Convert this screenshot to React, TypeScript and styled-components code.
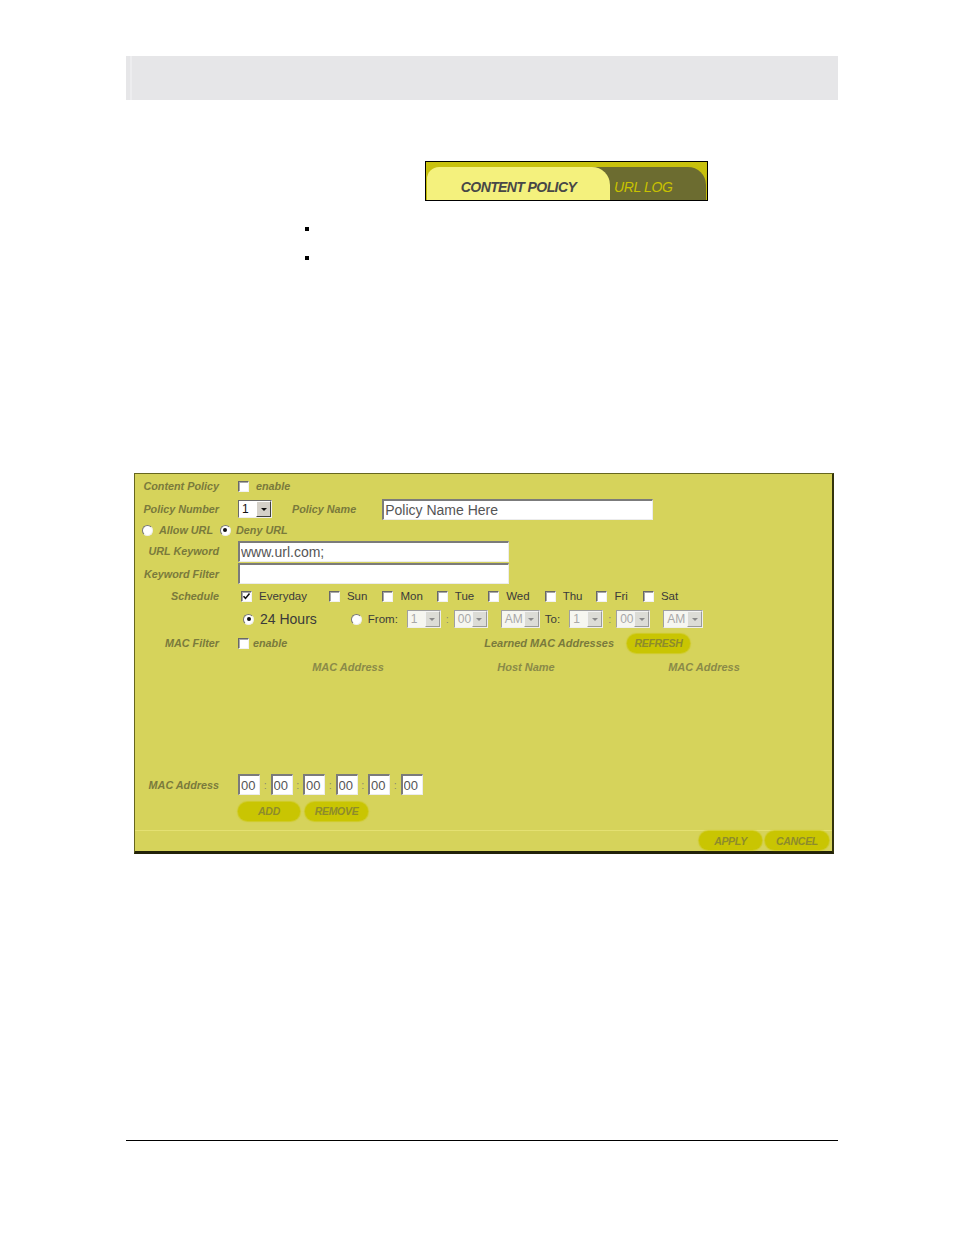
import React from 'react'
import styled, { createGlobalStyle } from 'styled-components'

const GlobalStyle = createGlobalStyle`
  html, body {
    margin: 0;
    padding: 0;
    background: #fff;
  }
  body {
    font-family: 'Liberation Sans', Arial, sans-serif;
  }
`

const Page = styled.div`
  width: 954px;
  min-height: 1235px;
  padding-left: 126px;
  box-sizing: border-box;
  display: flex;
  flex-direction: column;
  align-items: flex-start;
`

const HeaderBar = styled.div`
  margin-top: 56px;
  width: 712px;
  height: 44px;
  background: #e6e6e8;
  box-shadow: inset 4px 0 0 #e6e6e8, inset 6px 0 0 #ededef;
`

/* ---------- tab strip ---------- */

const TabStrip = styled.div`
  margin: 61px 0 0 299px;
  width: 283px;
  height: 40px;
  box-sizing: border-box;
  border: 1px solid #000;
  background: linear-gradient(180deg, #c9c20e 0%, #c2ba0a 100%);
  display: flex;
  align-items: flex-end;
  padding: 0 1px;
`

const Tab = styled.div<{ $active?: boolean }>`
  height: 33px;
  box-sizing: border-box;
  padding-top: 7px;
  display: flex;
  align-items: center;
  font-style: italic;
  font-size: 14px;
  white-space: nowrap;
  ${({ $active }) =>
    $active
      ? `
    position: relative;
    z-index: 1;
    width: 183px;
    justify-content: center;
    background: #f4f17d;
    border-radius: 12px 18px 0 0;
    color: #474747;
    font-weight: bold;
    letter-spacing: -0.6px;
  `
      : `
    flex: 1;
    margin-left: -20px;
    padding-left: 24px;
    background: #6c6c30;
    border-radius: 0 18px 0 0;
    color: #c9c200;
    letter-spacing: -0.4px;
  `}
`

/* ---------- bullets ---------- */

const BulletList = styled.ul`
  list-style: none;
  margin: 26px 0 0 179px;
  padding: 0;
  display: flex;
  flex-direction: column;
  gap: 25px;
`

const Bullet = styled.li`
  width: 4px;
  height: 4px;
  background: #000;
`

/* ---------- form panel ---------- */

const Panel = styled.div`
  margin: 213px 0 0 8px;
  width: 700px;
  box-sizing: border-box;
  background: #d6d35b;
  border-style: solid;
  border-width: 1px 2px 3px 1px;
  border-color: #66661f #33330c #222208 #66661f;
  display: flex;
  flex-direction: column;
  font-family: 'Liberation Sans', Arial, sans-serif;
`

const Row = styled.div<{ $h: number; $pl?: number }>`
  height: ${({ $h }) => $h}px;
  padding-left: ${({ $pl = 0 }) => $pl}px;
  display: flex;
  align-items: center;
  flex-shrink: 0;
`

const FieldLabel = styled.span`
  width: 84px;
  margin-right: 19px;
  flex-shrink: 0;
  text-align: right;
  font-style: italic;
  font-weight: bold;
  font-size: 10.8px;
  color: #7a7a3c;
  white-space: nowrap;
`

const Note = styled.span<{ $ml?: number; $size?: number }>`
  margin-left: ${({ $ml = 0 }) => $ml}px;
  font-style: italic;
  font-weight: bold;
  font-size: ${({ $size = 10.8 }) => $size}px;
  color: #7a7a3c;
  white-space: nowrap;
`

const Plain = styled.span<{ $ml?: number; $size?: number }>`
  margin-left: ${({ $ml = 0 }) => $ml}px;
  font-size: ${({ $size = 11.5 }) => $size}px;
  color: #3a3a3a;
  white-space: nowrap;
`

const Colon = styled.span<{ $w: number }>`
  width: ${({ $w }) => $w}px;
  text-align: center;
  font-size: 11px;
  color: #8a8a70;
  flex-shrink: 0;
`

const CheckBox = styled.span<{ $ml?: number }>`
  margin-left: ${({ $ml = 0 }) => $ml}px;
  width: 11px;
  height: 11px;
  box-sizing: border-box;
  flex-shrink: 0;
  background: #fff;
  border: 1px solid;
  border-color: #686868 #f2f2f2 #f2f2f2 #686868;
  box-shadow: inset 1px 1px 0 #a8a8a8;
  display: inline-flex;
  align-items: center;
  justify-content: center;
`

const RadioDot = styled.span<{ $on?: boolean; $ml?: number }>`
  margin-left: ${({ $ml = 0 }) => $ml}px;
  width: 11px;
  height: 11px;
  box-sizing: border-box;
  flex-shrink: 0;
  border-radius: 50%;
  background: #fff;
  border: 1px solid;
  border-color: #777 #eee #eee #777;
  display: inline-flex;
  align-items: center;
  justify-content: center;

  &::after {
    content: '';
    display: ${({ $on }) => ($on ? 'block' : 'none')};
    width: 4px;
    height: 4px;
    border-radius: 50%;
    background: #111;
  }
`

const TextField = styled.input<{ $w: number; $ml?: number; $size?: number }>`
  margin-left: ${({ $ml = 0 }) => $ml}px;
  width: ${({ $w }) => $w}px;
  height: 21px;
  box-sizing: border-box;
  flex-shrink: 0;
  border-style: solid;
  border-width: 2px 1px 1px 2px;
  border-color: #7b7b7b #ececec #ececec #7b7b7b;
  background: #fff;
  padding: 0 0 0 1px;
  font-family: 'Liberation Sans', Arial, sans-serif;
  font-size: ${({ $size = 14 }) => $size}px;
  color: #555;
  outline: none;
`

const SelectBox = styled.div<{ $w: number; $ml?: number; $off?: boolean }>`
  margin-left: ${({ $ml = 0 }) => $ml}px;
  width: ${({ $w }) => $w}px;
  height: 18px;
  box-sizing: border-box;
  flex-shrink: 0;
  display: flex;
  background: ${({ $off }) => ($off ? '#f6f6f0' : '#fff')};
  border: 1px solid;
  border-color: ${({ $off }) => ($off ? '#a0a0a0 #eee #eee #a0a0a0' : '#6a6a6a #eee #eee #6a6a6a')};
  font-size: 12px;
  color: ${({ $off }) => ($off ? '#a8a8a8' : '#111')};
`

const SelectValue = styled.span`
  flex: 1;
  padding-left: 3px;
  line-height: 16px;
`

const SelectArrow = styled.span<{ $off?: boolean }>`
  width: 15px;
  box-sizing: border-box;
  background: ${({ $off }) => ($off ? '#dcdcd6' : '#d4d0c8')};
  border: 1px solid;
  border-color: ${({ $off }) => ($off ? '#f4f4f4 #9a9a9a #9a9a9a #f4f4f4' : '#fff #404040 #404040 #fff')};
  display: flex;
  align-items: center;
  justify-content: center;

  &::after {
    content: '';
    border-left: 3px solid transparent;
    border-right: 3px solid transparent;
    border-top: 3px solid ${({ $off }) => ($off ? '#8a8a8a' : '#111')};
  }
`

const PillButton = styled.button<{ $w: number; $ml?: number }>`
  margin-left: ${({ $ml = 0 }) => $ml}px;
  width: ${({ $w }) => $w}px;
  height: 19px;
  flex-shrink: 0;
  border: 0;
  border-radius: 10px;
  padding: 0;
  background: #c9c502;
  box-shadow: 0 0 1px 1px rgba(201, 197, 2, 0.6);
  color: #8d8b2c;
  font-family: 'Liberation Sans', Arial, sans-serif;
  font-style: italic;
  font-weight: bold;
  font-size: 10.5px;
  letter-spacing: -0.3px;
`

const Spacer = styled.div<{ $h: number }>`
  height: ${({ $h }) => $h}px;
  flex-shrink: 0;
`

const HeaderGrid = styled.div`
  height: 24px;
  margin-left: 124px;
  display: grid;
  grid-template-columns: repeat(3, 178px);
  align-items: center;
  flex-shrink: 0;
`

const ColumnHead = styled.span`
  text-align: center;
  font-style: italic;
  font-weight: bold;
  font-size: 11px;
  color: #8a8a48;
`

const BottomBar = styled.div`
  margin-top: 4px;
  border-top: 1px solid #e4e072;
  padding: 0 3px 1px 0;
  display: flex;
  justify-content: flex-end;
  gap: 3px;
`

const FooterRule = styled.div`
  margin-top: 286px;
  width: 712px;
  height: 1px;
  background: #000;
`

const Tick = () => (
  <svg width="9" height="9" viewBox="0 0 9 9">
    <path d="M1.5 4.2 L3.5 6.4 L7.5 1.6" fill="none" stroke="#111" strokeWidth="1.6" />
  </svg>
)

const Select = ({ value, w, ml, off }: { value: string; w: number; ml?: number; off?: boolean }) => (
  <SelectBox $w={w} $ml={ml} $off={off}>
    <SelectValue>{value}</SelectValue>
    <SelectArrow $off={off} />
  </SelectBox>
)

const days = [
  { name: 'Sun', ml: 22 },
  { name: 'Mon', ml: 15 },
  { name: 'Tue', ml: 14 },
  { name: 'Wed', ml: 14 },
  { name: 'Thu', ml: 15 },
  { name: 'Fri', ml: 14 },
  { name: 'Sat', ml: 15 },
]

const macParts = ['00', '00', '00', '00', '00', '00']

const App = () => {
  return (
    <Page>
      <GlobalStyle />
      <HeaderBar />

      <TabStrip>
        <Tab $active>CONTENT POLICY</Tab>
        <Tab>URL LOG</Tab>
      </TabStrip>

      <BulletList>
        <Bullet />
        <Bullet />
      </BulletList>

      <Panel>
        <Row $h={24}>
          <FieldLabel>Content Policy</FieldLabel>
          <CheckBox />
          <Note $ml={7}>enable</Note>
        </Row>

        <Row $h={22}>
          <FieldLabel>Policy Number</FieldLabel>
          <Select value="1" w={34} />
          <Note $ml={20}>Policy Name</Note>
          <TextField $w={271} $ml={26} defaultValue="Policy Name Here" readOnly />
        </Row>

        <Row $h={20} $pl={7}>
          <RadioDot />
          <Note $ml={6}>Allow URL</Note>
          <RadioDot $on $ml={7} />
          <Note $ml={5}>Deny URL</Note>
        </Row>

        <Row $h={22}>
          <FieldLabel>URL Keyword</FieldLabel>
          <TextField $w={271} defaultValue="www.url.com;" readOnly />
        </Row>

        <Row $h={23}>
          <FieldLabel>Keyword Filter</FieldLabel>
          <TextField $w={271} defaultValue="" readOnly />
        </Row>

        <Row $h={22}>
          <FieldLabel>Schedule</FieldLabel>
          <CheckBox $ml={3}>
            <Tick />
          </CheckBox>
          <Plain $ml={7}>Everyday</Plain>
          {days.map((d) => (
            <React.Fragment key={d.name}>
              <CheckBox $ml={d.ml} />
              <Plain $ml={7}>{d.name}</Plain>
            </React.Fragment>
          ))}
        </Row>

        <Row $h={24}>
          <FieldLabel />
          <RadioDot $on $ml={5} />
          <Plain $ml={6} $size={14}>24 Hours</Plain>
          <RadioDot $ml={34} />
          <Plain $ml={6}>From:</Plain>
          <Select value="1" w={34} ml={9} off />
          <Colon $w={13}>:</Colon>
          <Select value="00" w={34} off />
          <Select value="AM" w={39} ml={13} off />
          <Plain $ml={5}>To:</Plain>
          <Select value="1" w={34} ml={9} off />
          <Colon $w={13}>:</Colon>
          <Select value="00" w={34} off />
          <Select value="AM" w={40} ml={13} off />
        </Row>

        <Row $h={24}>
          <FieldLabel>MAC Filter</FieldLabel>
          <CheckBox />
          <Note $ml={4}>enable</Note>
          <Note $ml={197} $size={11}>Learned MAC Addresses</Note>
          <PillButton $w={63} $ml={13}>REFRESH</PillButton>
        </Row>

        <HeaderGrid>
          <ColumnHead>MAC Address</ColumnHead>
          <ColumnHead>Host Name</ColumnHead>
          <ColumnHead>MAC Address</ColumnHead>
        </HeaderGrid>

        <Spacer $h={94} />

        <Row $h={23}>
          <FieldLabel>MAC Address</FieldLabel>
          {macParts.map((p, i) => (
            <React.Fragment key={i}>
              {i > 0 && <Colon $w={10.5}>:</Colon>}
              <TextField $w={22} $size={13} defaultValue={p} readOnly />
            </React.Fragment>
          ))}
        </Row>

        <Row $h={30}>
          <FieldLabel />
          <PillButton $w={62}>ADD</PillButton>
          <PillButton $w={63} $ml={5}>REMOVE</PillButton>
        </Row>

        <BottomBar>
          <PillButton $w={63}>APPLY</PillButton>
          <PillButton $w={64}>CANCEL</PillButton>
        </BottomBar>
      </Panel>

      <FooterRule />
    </Page>
  )
}

export default App
